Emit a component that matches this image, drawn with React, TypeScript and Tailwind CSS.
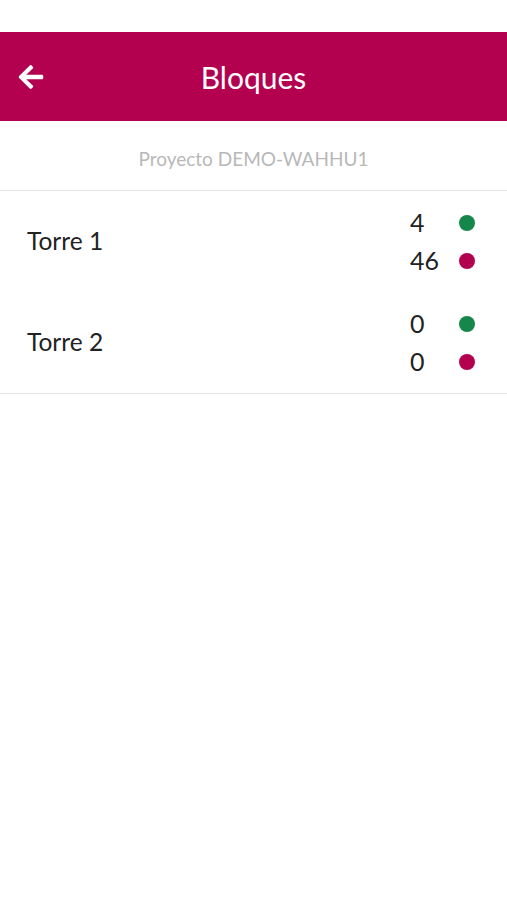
import { FaArrowLeft } from 'react-icons/fa';

const blocks = [
	{ id: 1, name: 'Torre 1', done: 4, pending: 46 },
	{ id: 2, name: 'Torre 2', done: 0, pending: 0 },
];

export default function App() {
	return (
		<div className="min-h-[900px] bg-white font-['Lato',sans-serif]">
			{/* status bar space */}
			<div className="h-8" />

			{/* Header */}
			<header className="h-[89px] bg-[#b3004f] flex items-center relative">
				<button className="absolute left-[17px] text-white">
					<FaArrowLeft className="w-[28px] h-[28px]" />
				</button>
				<h1 className="flex-1 text-center text-white text-[30px] leading-none">Bloques</h1>
			</header>

			{/* Project name */}
			<div className="h-[70px] flex items-center justify-center pt-[7px] border-b border-[#e6e6e6]">
				<p className="text-[19px] text-[#b8b8b8]">Proyecto DEMO-WAHHU1</p>
			</div>

			{/* Blocks list */}
			<ul className="border-b border-[#e6e6e6]">
				{blocks.map((b) => (
					<li key={b.id} className="h-[101px] flex items-center justify-between pl-[27px] pr-[32px]">
						<span className="text-[24.5px] text-[#222]">{b.name}</span>
						<div className="flex flex-col">
							<div className="flex items-center h-[38px]">
								<span className="w-[49px] text-[25px] text-[#222]">{b.done}</span>
								<span className="w-4 h-4 rounded-full bg-[#16874a]" />
							</div>
							<div className="flex items-center h-[38px]">
								<span className="w-[49px] text-[25px] text-[#222]">{b.pending}</span>
								<span className="w-4 h-4 rounded-full bg-[#b3004f]" />
							</div>
						</div>
					</li>
				))}
			</ul>
		</div>
	);
}
